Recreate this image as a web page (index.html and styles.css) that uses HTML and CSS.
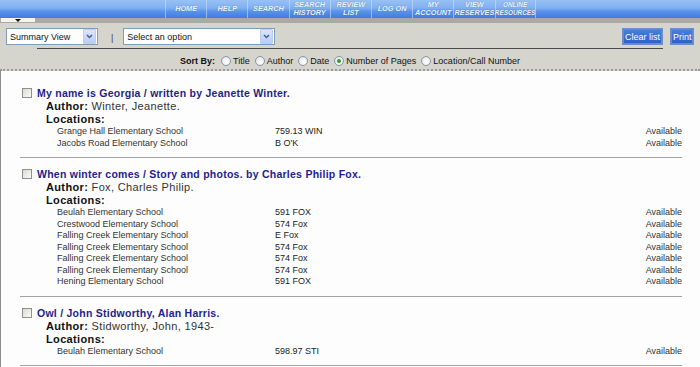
FILE: index.html
```html
<!DOCTYPE html>
<html lang="en">
<head>
  <meta charset="UTF-8" />
  <meta name="viewport" content="width=device-width, initial-scale=1.0" />
  <title>Review List</title>
  <link rel="stylesheet" href="styles.css">
</head>
<body>
  <header class="topbar">
    <nav class="topnav">
      <a href="#">HOME</a>
      <a href="#">HELP</a>
      <a href="#">SEARCH</a>
      <a href="#">SEARCH<br>HISTORY</a>
      <a href="#">REVIEW<br>LIST</a>
      <a href="#">LOG ON</a>
      <a href="#">MY<br>ACCOUNT</a>
      <a href="#">VIEW<br>RESERVES</a>
      <a href="#" class="small">ONLINE<br>RESOURCES</a>
    </nav>
  </header>
  <div class="strip"><span class="tab"><span class="arrow"></span></span></div>

  <div class="toolbar">
    <div class="tool-row">
      <div class="select view-select">
        <span>Summary View</span>
        <span class="drop"><svg width="7" height="5" viewBox="0 0 7 5"><path d="M1 1 L3.5 3.5 L6 1" fill="none" stroke="#4d6185" stroke-width="1.5"/></svg></span>
      </div>
      <span class="pipe">|</span>
      <div class="select option-select">
        <span>Select an option</span>
        <span class="drop"><svg width="7" height="5" viewBox="0 0 7 5"><path d="M1 1 L3.5 3.5 L6 1" fill="none" stroke="#4d6185" stroke-width="1.5"/></svg></span>
      </div>
      <div class="buttons">
        <button class="btn clear">Clear list</button>
        <button class="btn print">Print</button>
      </div>
    </div>
    <div class="rule"></div>
    <div class="sort-row">
      <b>Sort By:</b>
      <label><span class="radio"></span>Title</label>
      <label><span class="radio"></span>Author</label>
      <label><span class="radio"></span>Date</label>
      <label><span class="radio checked"></span>Number of Pages</label>
      <label><span class="radio"></span>Location/Call Number</label>
    </div>
  </div>

  <div class="results">
    <div class="record">
      <div class="title"><span class="check"></span><a href="#">My name is Georgia / written by Jeanette Winter.</a></div>
      <div class="meta"><b>Author:</b> Winter, Jeanette.</div>
      <div class="meta"><b>Locations:</b></div>
      <div class="loc"><span>Grange Hall Elementary School</span><span class="call">759.13 WIN</span><span>Available</span></div>
      <div class="loc"><span>Jacobs Road Elementary School</span><span class="call">B O'K</span><span>Available</span></div>
    </div>

    <div class="record">
      <div class="title"><span class="check"></span><a href="#">When winter comes / Story and photos. by Charles Philip Fox.</a></div>
      <div class="meta"><b>Author:</b> Fox, Charles Philip.</div>
      <div class="meta"><b>Locations:</b></div>
      <div class="loc"><span>Beulah Elementary School</span><span class="call">591 FOX</span><span>Available</span></div>
      <div class="loc"><span>Crestwood Elementary School</span><span class="call">574 Fox</span><span>Available</span></div>
      <div class="loc"><span>Falling Creek Elementary School</span><span class="call">E Fox</span><span>Available</span></div>
      <div class="loc"><span>Falling Creek Elementary School</span><span class="call">574 Fox</span><span>Available</span></div>
      <div class="loc"><span>Falling Creek Elementary School</span><span class="call">574 Fox</span><span>Available</span></div>
      <div class="loc"><span>Falling Creek Elementary School</span><span class="call">574 Fox</span><span>Available</span></div>
      <div class="loc"><span>Hening Elementary School</span><span class="call">591 FOX</span><span>Available</span></div>
    </div>

    <div class="record">
      <div class="title"><span class="check"></span><a href="#">Owl / John Stidworthy, Alan Harris.</a></div>
      <div class="meta"><b>Author:</b> Stidworthy, John, 1943-</div>
      <div class="meta"><b>Locations:</b></div>
      <div class="loc"><span>Beulah Elementary School</span><span class="call">598.97 STI</span><span>Available</span></div>
    </div>
  </div>
</body>
</html>
```

FILE: styles.css
```css
body {
  margin: 0;
  width: 700px;
  font-family: 'Liberation Sans', Arial, sans-serif;
  background: #fdfdfd;
  color: #222;
  overflow: hidden;
}

/* top navigation */
.topbar {
  height: 18px;
  background: linear-gradient(#98c0f4, #80b0f1 45%, #5a93ea 62%, #3f7be2);
}

.topnav {
  display: flex;
  height: 18px;
  margin-left: 165px;
}

.topnav a {
  width: 41.2px;
  box-sizing: border-box;
  display: flex;
  align-items: center;
  justify-content: center;
  text-align: center;
  border-left: 1px solid rgba(200, 222, 255, 0.6);
  color: #eaf2ff;
  text-decoration: none;
  font-style: italic;
  font-weight: bold;
  font-size: 7.3px;
  line-height: 7.6px;
  text-shadow: 0 0 1px rgba(40, 80, 160, 0.6);
}

.topnav a:last-child {
  border-right: 1px solid rgba(200, 222, 255, 0.6);
}

.topnav a.small {
  font-size: 6.4px;
}

.strip {
  height: 5px;
  background-color: #a9a9a9;
  background-image: radial-gradient(#8e8e8e 0.6px, transparent 0.7px);
  background-size: 2px 2px;
}

.tab {
  display: flex;
  justify-content: center;
  align-items: center;
  width: 34px;
  height: 4px;
  margin-left: 1px;
  background: #f3f3f3;
}

.arrow {
  width: 0;
  height: 0;
  border-left: 3px solid transparent;
  border-right: 3px solid transparent;
  border-top: 3px solid #111;
}

/* toolbar */
.toolbar {
  background: #d5d5cd;
  padding-top: 5px;
  padding-bottom: 1px;
  border-bottom: 2px dotted #9a9a9a;
}

.tool-row {
  display: flex;
  align-items: center;
  height: 17px;
  padding: 0 6px;
}

.select {
  display: flex;
  align-items: center;
  justify-content: space-between;
  box-sizing: border-box;
  height: 17px;
  padding: 0 1px 0 3px;
  border: 1px solid #7f9db9;
  background: #fff;
  font-size: 9px;
  color: #111;
}

.view-select {
  width: 92px;
}

.option-select {
  width: 152px;
}

.drop {
  display: flex;
  align-items: center;
  justify-content: center;
  width: 11px;
  height: 13px;
  border: 1px solid #bccdf2;
  border-radius: 1px;
  background: linear-gradient(#dbe5fc, #b9cdf6);
}

.pipe {
  margin: 3px 10px 0 13px;
  font-size: 9px;
  color: #444;
}

.buttons {
  display: flex;
  gap: 7px;
  margin-left: auto;
}

.btn {
  height: 17px;
  padding: 0 2px;
  border: 1px solid #6f8fc8;
  box-shadow: inset 0 0 0 1px #5d8ad8;
  background: linear-gradient(#4c80dc, #2c5fc4);
  color: #fff;
  font-family: 'Liberation Sans', Arial, sans-serif;
  font-size: 9px;
  cursor: pointer;
}

.clear {
  width: 41px;
}

.print {
  width: 24px;
}

.rule {
  margin: 3px 37px 0 37px;
  border-top: 1px solid #4a4a4a;
}

.sort-row {
  display: flex;
  align-items: center;
  justify-content: center;
  height: 14px;
  margin-top: 5px;
  font-size: 9px;
  color: #111;
}

.sort-row b {
  margin-right: 1px;
}

.sort-row label {
  display: flex;
  align-items: center;
  margin-left: 5px;
}

.radio {
  position: relative;
  width: 8px;
  height: 8px;
  margin-right: 2px;
  border: 1px solid #8a95a6;
  border-radius: 50%;
  background: radial-gradient(circle at 60% 60%, #fff, #dcdfe4);
}

.radio.checked::after {
  content: "";
  position: absolute;
  top: 2px;
  left: 2px;
  width: 4px;
  height: 4px;
  border-radius: 50%;
  background: #2a9d2a;
}

/* results list */
.results {
  padding: 6px 18px 0 19px;
  border-left: 1px solid #8c8c8c;
  min-height: 300px;
}

.record {
  padding: 9px 0 8px;
  border-bottom: 1px solid #a2a2a2;
}

.title {
  display: flex;
  align-items: center;
  height: 14px;
}

.title a {
  color: #1f1f8c;
  font-weight: bold;
  font-size: 10.5px;
  letter-spacing: 0.25px;
  text-decoration: none;
}

.check {
  box-sizing: border-box;
  width: 10px;
  height: 10px;
  margin: 0 5px 0 2px;
  border: 1px solid #8e8f8f;
  background: linear-gradient(135deg, #d9d9d4, #fbfbf9);
}

.meta {
  padding-left: 26px;
  font-size: 11px;
  line-height: 13px;
  letter-spacing: 0.35px;
  color: #333;
}

.meta b {
  color: #111;
}

.loc {
  display: grid;
  grid-template-columns: 218px 1fr auto;
  padding-left: 37px;
  font-size: 9px;
  line-height: 11.5px;
  color: #333;
}

.loc .call {
  color: #222;
}
```
